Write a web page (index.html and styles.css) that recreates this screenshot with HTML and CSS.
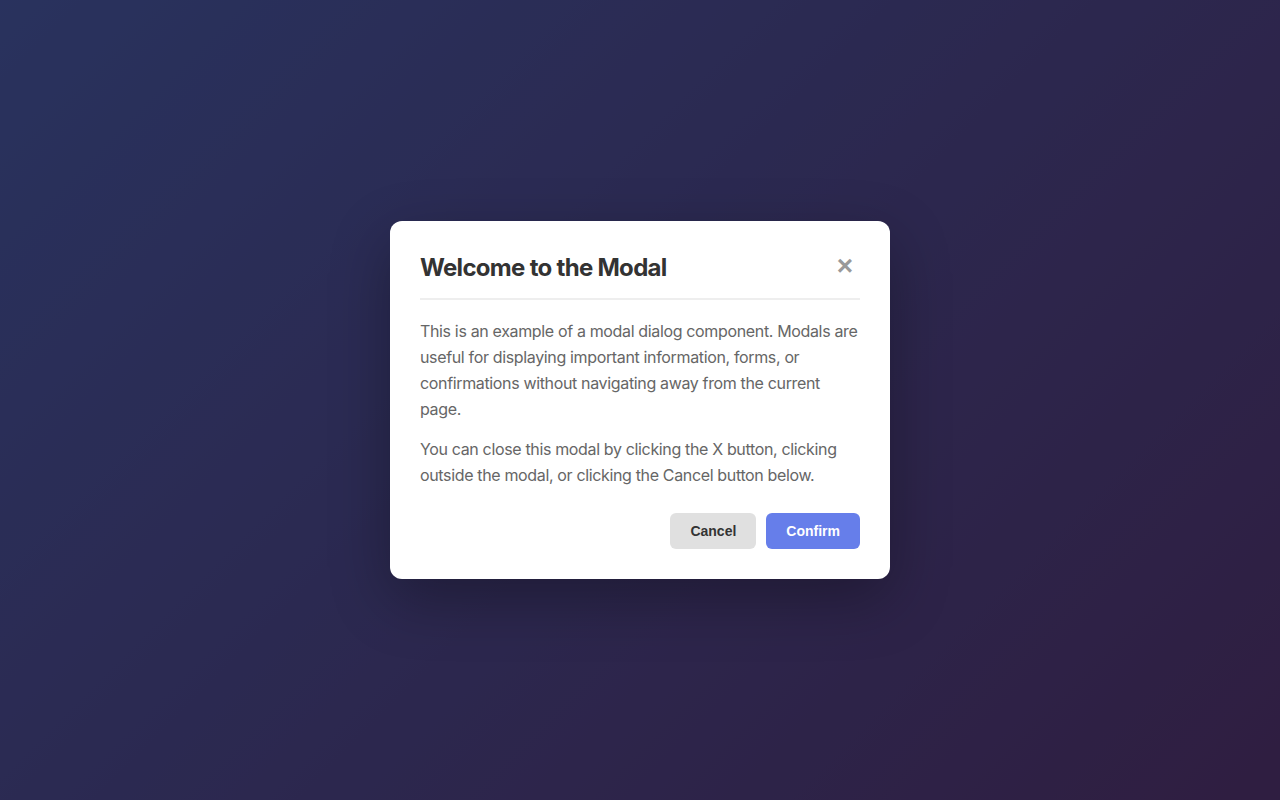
FILE: index.html
```html
<!DOCTYPE html>
<html lang="en">
<head>
<meta charset="utf-8">
<title>Modal</title>
<link rel="stylesheet" href="styles.css">
</head>
<body>
<div class="overlay">
  <div class="modal" role="dialog" aria-labelledby="modal-title">
    <div class="modal-header">
      <h2 id="modal-title" class="modal-title">Welcome to the Modal</h2>
      <button class="close-btn" aria-label="Close">&times;</button>
    </div>
    <div class="modal-body">
      <p>This is an example of a modal dialog component. Modals are useful for displaying important information, forms, or confirmations without navigating away from the current page.</p>
      <p>You can close this modal by clicking the X button, clicking outside the modal, or clicking the Cancel button below.</p>
    </div>
    <div class="modal-footer">
      <button class="btn btn-cancel">Cancel</button>
      <button class="btn btn-confirm">Confirm</button>
    </div>
  </div>
</div>
</body>
</html>
```
FILE: styles.css
```css
* { box-sizing: border-box; }
html, body { margin: 0; padding: 0; height: 100%; }
body {
  font-family: Inter, "Noto Sans", sans-serif;
  background: linear-gradient(135deg, #667eea 0%, #764ba2 100%);
}
.overlay {
  width: 100%;
  height: 100%;
  background: rgba(0, 0, 0, 0.6);
  display: flex;
  align-items: center;
  justify-content: center;
}
.modal {
  width: 500px;
  background: #fff;
  border-radius: 12px;
  padding: 30px;
  box-shadow: 0 20px 60px rgba(0, 0, 0, 0.3);
}
.modal-header {
  display: flex;
  align-items: flex-start;
  justify-content: space-between;
  padding-bottom: 13px;
  border-bottom: 2px solid #eeeeee;
  margin-bottom: 18px;
}
.modal-title {
  margin: 0;
  font-size: 24px;
  font-weight: 700;
  color: #333;
  letter-spacing: -0.7px;
  line-height: 34px;
}
.close-btn {
  width: 30px;
  height: 30px;
  border: none;
  background: none;
  padding: 0;
  font-family: "Liberation Sans", Arial, sans-serif;
  font-size: 28px;
  font-weight: 700;
  line-height: 30px;
  color: #999;
  cursor: pointer;
}
.modal-body p {
  margin: 0 0 14px;
  font-size: 16px;
  line-height: 26px;
  color: #666;
  letter-spacing: -0.35px;
}
.modal-body p:last-child { margin-bottom: 0; }
.modal-footer {
  display: flex;
  justify-content: flex-end;
  gap: 10px;
  margin-top: 25px;
}
.btn {
  height: 36px;
  padding: 0 20px;
  border: none;
  border-radius: 6px;
  font-family: "Liberation Sans", Arial, sans-serif;
  font-size: 14px;
  font-weight: 700;
  cursor: pointer;
}
.btn-cancel { background: #e0e0e0; color: #333; }
.btn-confirm { background: #667eea; color: #fff; }
```
